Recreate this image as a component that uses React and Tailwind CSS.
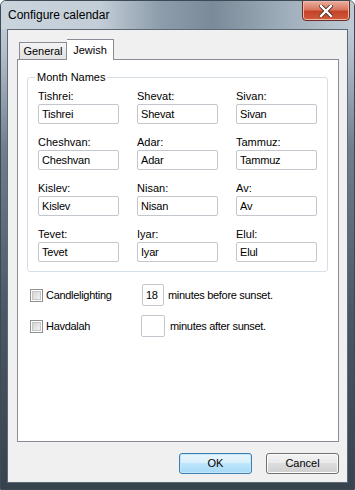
const months = [
  ['Tishrei', 'Shevat', 'Sivan'],
  ['Cheshvan', 'Adar', 'Tammuz'],
  ['Kislev', 'Nisan', 'Av'],
  ['Tevet', 'Iyar', 'Elul'],
];

const Field = ({ name }) => (
  <div className="flex w-[81px] flex-col">
    <label className="h-[13px] text-[11px] leading-[13px] text-black">{name}:</label>
    <input
      readOnly
      value={name}
      className="mt-[1px] h-[20px] w-[81px] rounded-[2px] border border-[#c3c7cd] bg-white px-[3px] text-[11px] tracking-[-0.2px] text-black outline-none"
    />
  </div>
);

const Checkbox = () => (
  <span className="flex h-[13px] w-[13px] items-center justify-center border border-[#8e8f8f] bg-white">
    <span className="h-[9px] w-[9px] border border-[#c6c6c6] bg-gradient-to-br from-[#d4d4d4] to-[#f2f2f2]" />
  </span>
);

const Button = ({ children, primary }) => (
  <button
    className={`flex h-[21px] w-[73px] items-center justify-center rounded-[3px] border text-[11px] text-black ${
      primary
        ? 'border-[#3c7fb1] bg-[linear-gradient(#eaf6fd_0%,#d9f0fc_45%,#bee6fd_50%,#a7d9f5_100%)] shadow-[inset_0_0_0_1px_#c4e5f6]'
        : 'border-[#707070] bg-[linear-gradient(#f2f2f2_0%,#ebebeb_45%,#dddddd_50%,#cfcfcf_100%)] shadow-[inset_0_0_0_1px_#fcfcfc]'
    }`}
  >
    {children}
  </button>
);

export default function App() {
  return (
    <div
      className="flex h-[490px] w-[355px] flex-col overflow-hidden rounded-t-[6px] border border-[#3d4954] bg-[linear-gradient(#ccd6df_0%,#b4c1cd_10%,#6f7f8d_30%,#485764_65%,#36434f_100%)]"
      style={{ fontFamily: '"Liberation Sans", Arial, sans-serif' }}
    >
      {/* Title bar */}
      <div className="flex h-[28px] shrink-0 items-start justify-between bg-[linear-gradient(90deg,#cad4dd_0%,#c2cdd7_28%,#8d9dab_45%,#7a8a98_60%,#9eadba_80%,#bfcad4_100%)]">
        <span className="pl-[7px] pt-[7px] text-[12px] leading-[14px] text-black">Configure calendar</span>
        <div className="mr-[4px] mt-[-1px] flex h-[21px] w-[48px] items-center justify-center rounded-b-[4px] border border-[#6b2d22] bg-[linear-gradient(#eab0a0_0%,#d9775f_45%,#c4432a_55%,#d05a3c_100%)] shadow-[inset_0_0_0_1px_#f0b8a8]">
          <svg width="14" height="12" viewBox="0 0 14 12">
            <path d="M2 1 L12 11 M12 1 L2 11" stroke="#4a2a25" strokeWidth="4" strokeLinecap="square" />
            <path d="M2 1 L12 11 M12 1 L2 11" stroke="#ffffff" strokeWidth="2.4" strokeLinecap="square" />
          </svg>
        </div>
      </div>

      {/* Client area */}
      <div className="mx-[6px] mb-[6px] flex flex-1 flex-col border border-[#5d6976] bg-[#f0f0f0] px-[9px] pt-[8px]">
        {/* Tabs */}
        <div className="flex h-[21px] items-end pl-[2px]">
          <div className="mb-[-1px] flex h-[18px] w-[48px] items-center justify-center border border-b-0 border-[#898c95] bg-[linear-gradient(#f3f3f3,#e1e1e1)] text-[11px] text-black">
            General
          </div>
          <div className="relative z-10 mb-[-1px] flex h-[21px] w-[47px] items-start justify-center border border-b-0 border-l-0 border-[#898c95] bg-white pt-[2px] text-[11px] text-black">
            Jewish
          </div>
        </div>

        {/* Tab panel */}
        <div className="flex h-[383px] w-[322px] flex-col border border-[#898c95] bg-white px-[9px] pt-[11px]">
          <fieldset className="h-[201px] w-[301px] rounded-[3px] border border-[#d5dfe5] px-[10px] pt-[6px]">
            <legend className="ml-[-3px] px-[2px] text-[11px] leading-[13px] text-black">Month Names</legend>
            <div className="flex flex-col gap-[12px]">
              {months.map((row, i) => (
                <div key={i} className="flex gap-[18px]">
                  {row.map((m) => (
                    <Field key={m} name={m} />
                  ))}
                </div>
              ))}
            </div>
          </fieldset>

          <div className="mt-[12px] flex flex-col gap-[9px] pl-[3px] text-[11px] tracking-[-0.3px] text-black">
            <div className="flex h-[22px] items-center">
              <Checkbox />
              <span className="ml-[3px] w-[96px]">Candlelighting</span>
              <input
                readOnly
                value="18"
                className="h-[22px] w-[22px] rounded-[2px] border border-[#c3c7cd] bg-white px-[3px] text-[11px] outline-none"
              />
              <span className="ml-[4px]">minutes before sunset.</span>
            </div>
            <div className="flex h-[22px] items-center">
              <Checkbox />
              <span className="ml-[3px] w-[95px]">Havdalah</span>
              <input
                readOnly
                value=""
                className="h-[22px] w-[24px] rounded-[2px] border border-[#c3c7cd] bg-white px-[3px] text-[11px] outline-none"
              />
              <span className="ml-[5px]">minutes after sunset.</span>
            </div>
          </div>
        </div>

        {/* Buttons */}
        <div className="mt-[11px] flex w-[322px] justify-end gap-[14px]">
          <Button primary>OK</Button>
          <Button>Cancel</Button>
        </div>
      </div>
    </div>
  );
}
